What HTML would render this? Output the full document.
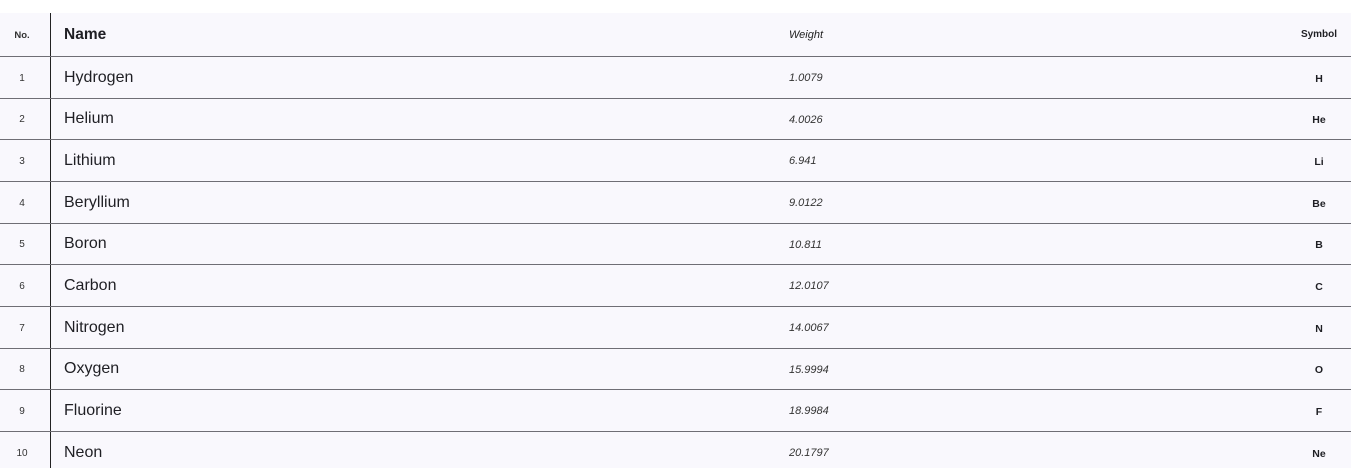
<!DOCTYPE html>
<html><head><meta charset="utf-8"><style>
body{margin:0;width:1351px;height:468px;background:#fff;overflow:hidden;font-family:"Liberation Sans",sans-serif;color:#1f1f24;position:relative}
.bg{position:absolute;left:0;top:13px;width:1351px;height:455px;background:#f9f8fd}
.v{position:absolute;left:50px;top:13px;width:1px;height:455px;background:#222}
.h{position:absolute;left:0;width:1351px;height:1px;background:#6f6e75}
.t{position:absolute;white-space:nowrap;line-height:1}
.no{width:44px;left:0;text-align:center;font-size:10px;color:#333}
.nm{left:64px;font-size:16px}
.wt{left:789px;font-size:11px;font-style:italic;color:#333}
.sy{left:1280px;width:78px;text-align:center;font-size:10.5px;font-weight:bold}
</style></head><body>
<div class="bg"></div>
<div class="v"></div>
<div class="t no" style="top:31px;font-weight:bold;font-size:9.5px">No.</div>
<div class="t nm" style="top:27px;font-weight:bold;font-size:15.5px">Name</div>
<div class="t wt" style="top:30px;color:#222">Weight</div>
<div class="t sy" style="top:30px;font-size:10px">Symbol</div>
<div id="rows"></div>
<script>
var d=[["Hydrogen","1.0079","H"],["Helium","4.0026","He"],["Lithium","6.941","Li"],["Beryllium","9.0122","Be"],["Boron","10.811","B"],["Carbon","12.0107","C"],["Nitrogen","14.0067","N"],["Oxygen","15.9994","O"],["Fluorine","18.9984","F"],["Neon","20.1797","Ne"]];
var h="";
for(var i=0;i<10;i++){var y=56+i*41.67;var c=y+21;
h+='<div class="h" style="top:'+Math.round(y)+'px"></div>';
h+='<div class="t no" style="top:'+(c-3.5)+'px">'+(i+1)+'</div>';
h+='<div class="t nm" style="top:'+(c-7.5)+'px">'+d[i][0]+'</div>';
h+='<div class="t wt" style="top:'+(c-4)+'px">'+d[i][1]+'</div>';
h+='<div class="t sy" style="top:'+(c-3.5)+'px">'+d[i][2]+'</div>';}
document.getElementById("rows").innerHTML=h;
</script>
</body></html>
